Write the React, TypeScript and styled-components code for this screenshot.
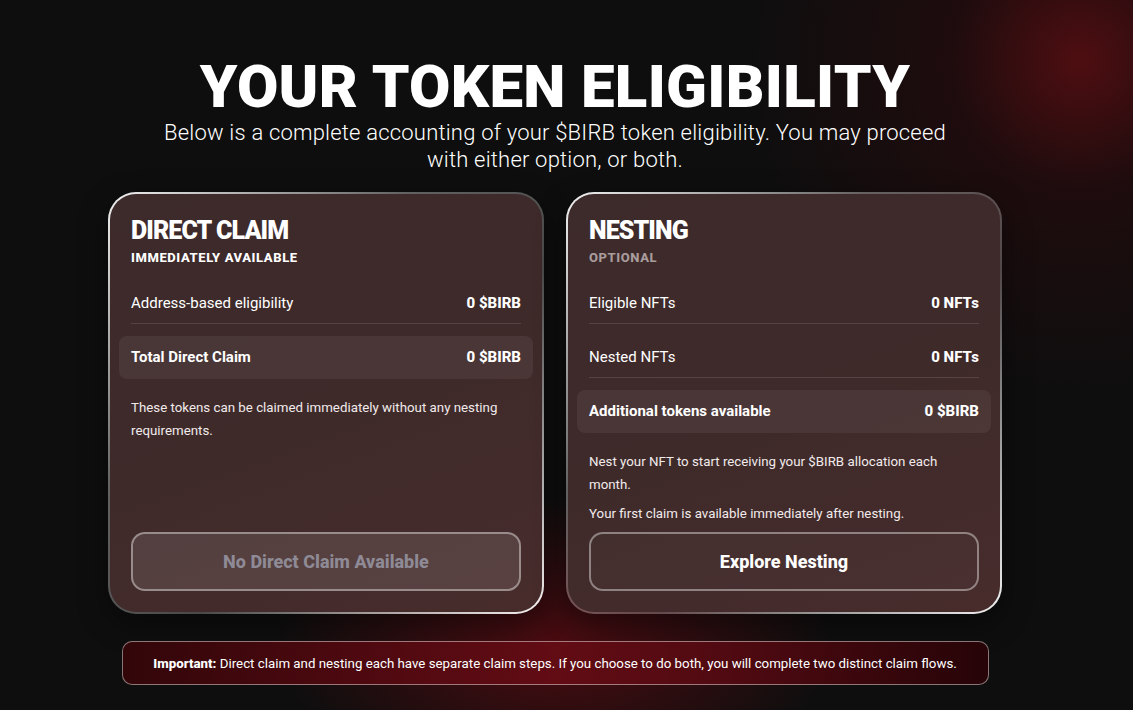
import React from "react";
import styled, { createGlobalStyle } from "styled-components";

const Global = createGlobalStyle`
  html, body { margin: 0; padding: 0; }
  body {
    background: #0e0e0e;
    font-family: Roboto, "Liberation Sans", sans-serif;
    color: #fff;
  }
  * { box-sizing: border-box; }
`;

const Page = styled.div`
  position: relative;
  min-height: 710px;
  padding: 55px 23px 0 0;
  display: flex;
  flex-direction: column;
  align-items: center;
  overflow: hidden;
  background:
    radial-gradient(circle at 1080px 60px, rgba(100, 14, 18, 0.75) 0, rgba(60, 8, 12, 0.35) 130px, rgba(14, 14, 14, 0) 340px),
    radial-gradient(ellipse 280px 150px at 555px 645px, rgba(115, 10, 18, 0.6) 0, rgba(14, 14, 14, 0) 100%),
    #0e0e0e;
`;

const Title = styled.h1`
  margin: 0;
  font-family: Roboto, "Liberation Sans", sans-serif;
  font-weight: 900;
  font-size: 60px;
  line-height: 64px;
  letter-spacing: 0.3px;
  text-align: center;
`;

const Lead = styled.p`
  margin: 0;
  width: 800px;
  font-size: 22px;
  line-height: 27px;
  font-weight: 300;
  letter-spacing: 0.2px;
  text-align: center;
`;

const Cards = styled.div`
  margin-top: 19px;
  display: grid;
  grid-template-columns: 436px 436px;
  gap: 22px;
`;

const Card = styled.section`
  min-height: 422px;
  display: flex;
  flex-direction: column;
  padding: 22px 21px 21px;
  border-radius: 28px;
  border: 2px solid transparent;
  background:
    linear-gradient(160deg, #3d2a2a 0%, #3f2a2a 55%, #482c2c 100%) padding-box,
    linear-gradient(135deg, rgba(255,255,255,0.95) 0%, rgba(255,255,255,0.35) 35%, rgba(255,255,255,0.25) 60%, rgba(255,255,255,0.95) 100%) border-box;
  box-shadow: 0 10px 30px rgba(0,0,0,0.4);
`;

const CardTitle = styled.h2`
  margin: 0;
  font-size: 25px;
  line-height: 30px;
  font-weight: 900;
  letter-spacing: -0.9px;
`;

const CardTag = styled.div<{ $muted?: boolean }>`
  margin-top: 4px;
  font-size: 13px;
  line-height: 16px;
  font-weight: 800;
  letter-spacing: 0.6px;
  color: ${(p) => (p.$muted ? "#a99c9c" : "#ffffff")};
`;

const Rows = styled.div`
  margin-top: 16px;
  display: flex;
  flex-direction: column;
  gap: 12px;
`;

const Row = styled.div<{ $total?: boolean }>`
  display: flex;
  justify-content: space-between;
  align-items: center;
  font-size: 15px;
  line-height: 20px;
  ${(p) =>
    p.$total
      ? `
    margin: 0 -12px;
    padding: 11px 12px 12px;
    border-radius: 8px;
    background: rgba(255,255,255,0.06);
    font-weight: 700;
  `
      : `
    padding: 11px 0 10px;
    border-bottom: 1px solid rgba(255,255,255,0.12);
  `}
`;

const Value = styled.span`
  font-weight: 800;
`;

const Note = styled.p<{ $first?: boolean }>`
  margin: ${(p) => (p.$first ? "17px" : "6px")} 0 0;
  font-size: 13.3px;
  line-height: 23px;
  color: #f1eaea;
`;

const Button = styled.button<{ $disabled?: boolean }>`
  margin-top: auto;
  height: 59px;
  width: 100%;
  border-radius: 14px;
  border: 2px solid rgba(255,255,255,0.4);
  background: ${(p) => (p.$disabled ? "rgba(255,255,255,0.1)" : "rgba(255,255,255,0.02)")};
  color: ${(p) => (p.$disabled ? "#8e8b96" : "#ffffff")};
  font-family: Roboto, "Liberation Sans", sans-serif;
  font-size: 18px;
  font-weight: 800;
  cursor: ${(p) => (p.$disabled ? "default" : "pointer")};
`;

const Banner = styled.div`
  margin-top: 27px;
  width: 867px;
  height: 44px;
  display: flex;
  align-items: center;
  justify-content: center;
  border-radius: 10px;
  border: 1.5px solid rgba(255,255,255,0.45);
  background: linear-gradient(90deg, #320609 0%, #550a11 35%, #620c14 50%, #500a11 70%, #260407 100%);
  font-size: 13.3px;
  color: #fff;
  b { font-weight: 800; }
`;

export default function App() {
  return (
    <>
      <Global />
      <Page>
        <Title>YOUR TOKEN ELIGIBILITY</Title>
        <Lead>
          Below is a complete accounting of your $BIRB token eligibility. You may proceed with either option, or both.
        </Lead>
        <Cards>
          <Card>
            <CardTitle>DIRECT CLAIM</CardTitle>
            <CardTag>IMMEDIATELY AVAILABLE</CardTag>
            <Rows>
              <Row>
                <span>Address-based eligibility</span>
                <Value>0 $BIRB</Value>
              </Row>
              <Row $total>
                <span>Total Direct Claim</span>
                <Value>0 $BIRB</Value>
              </Row>
            </Rows>
            <Note $first>These tokens can be claimed immediately without any nesting requirements.</Note>
            <Button $disabled disabled>No Direct Claim Available</Button>
          </Card>
          <Card>
            <CardTitle>NESTING</CardTitle>
            <CardTag $muted>OPTIONAL</CardTag>
            <Rows>
              <Row>
                <span>Eligible NFTs</span>
                <Value>0 NFTs</Value>
              </Row>
              <Row>
                <span>Nested NFTs</span>
                <Value>0 NFTs</Value>
              </Row>
              <Row $total>
                <span>Additional tokens available</span>
                <Value>0 $BIRB</Value>
              </Row>
            </Rows>
            <Note $first>Nest your NFT to start receiving your $BIRB allocation each month.</Note>
            <Note>Your first claim is available immediately after nesting.</Note>
            <Button>Explore Nesting</Button>
          </Card>
        </Cards>
        <Banner>
          <span>
            <b>Important:</b> Direct claim and nesting each have separate claim steps. If you choose to do both, you will complete two distinct claim flows.
          </span>
        </Banner>
      </Page>
    </>
  );
}
